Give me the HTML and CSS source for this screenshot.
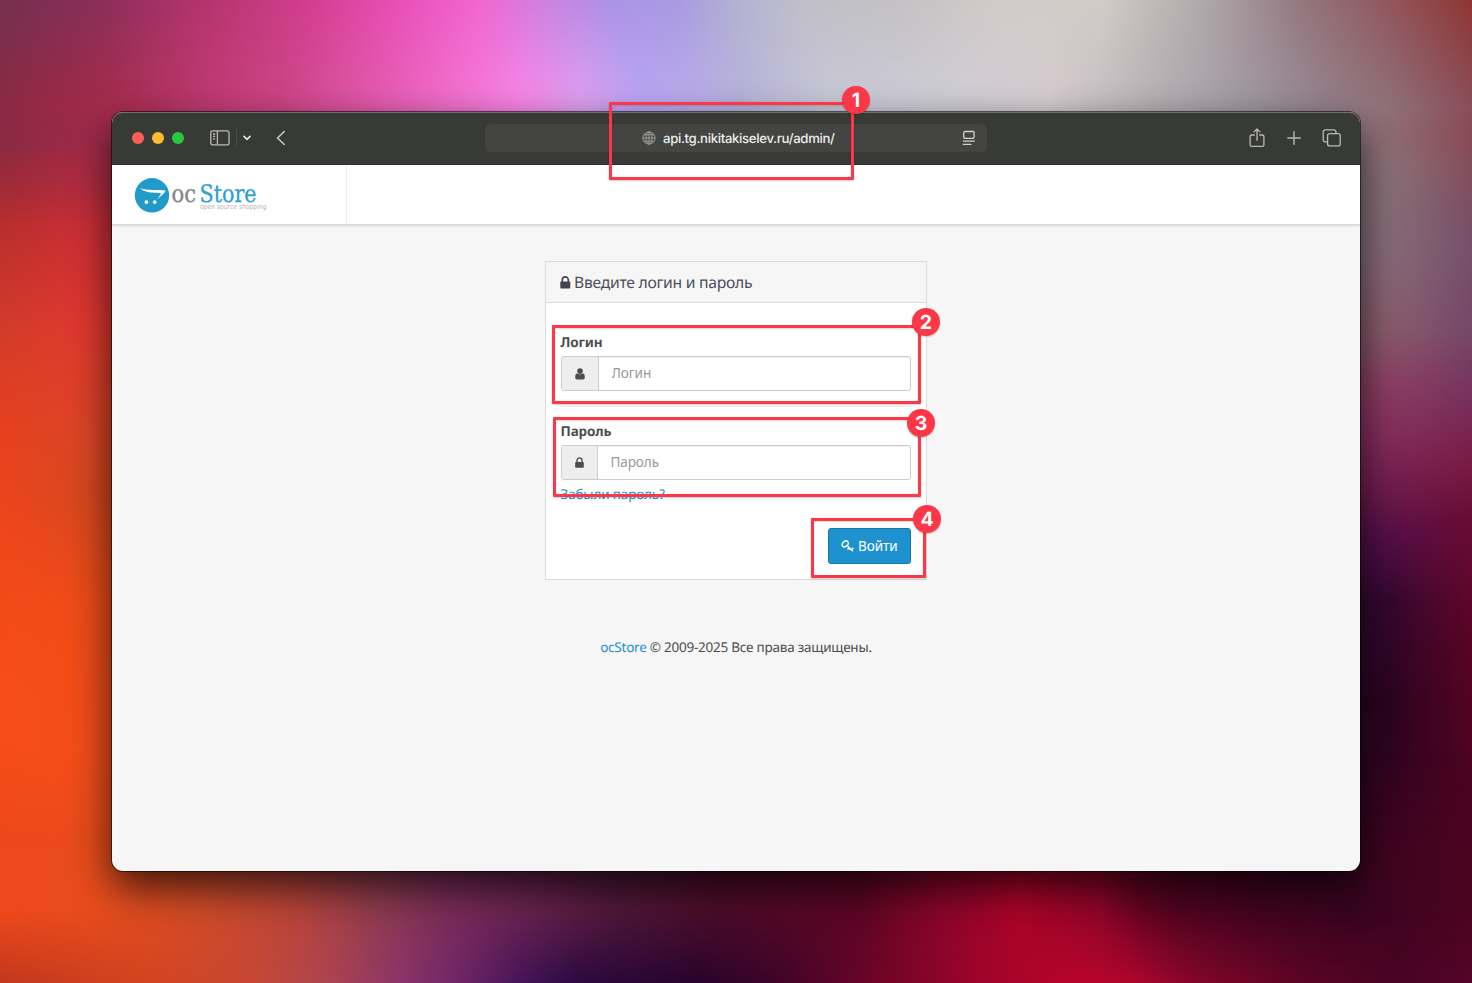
FILE: index.html
```html
<!DOCTYPE html>
<html lang="ru">
<head>
<meta charset="utf-8">
<title>ocStore</title>
<link rel="stylesheet" href="styles.css">
</head>
<body>
<div class="wallpaper">
  <div class="band band-left"></div><div class="band band-left-in"></div>
  <div class="band band-right"></div><div class="band band-right-in"></div>
  <div class="band band-top"></div><div class="band band-top-in"></div>
  <div class="band band-bottom"></div><div class="band band-bottom-in"></div>
</div>
<main class="window">
  <div class="toolbar">
    <div class="tools-left">
      <div class="lights"><i class="light red"></i><i class="light yellow"></i><i class="light green"></i></div>
      <svg class="ic-sidebar" width="20" height="16" viewBox="0 0 20 16" fill="none" stroke="#b9bab6" stroke-width="1.3"><rect x=".8" y=".8" width="18.2" height="14" rx="1.6"/><path d="M7.4 1v13.6M3 4h2.2M3 6.4h2.2M3 8.800h2.200"/></svg>
      <span class="sep"></span>
      <svg class="ic-down" width="10" height="8" viewBox="0 0 10 8" fill="none" stroke="#e2e2df" stroke-width="1.7" stroke-linecap="round" stroke-linejoin="round"><path d="M2 2.300l3 3 3-3"/></svg>
      <svg class="ic-back" width="10" height="16" viewBox="0 0 10 16" fill="none" stroke="#c9cac6" stroke-width="1.5" stroke-linecap="round" stroke-linejoin="round"><path d="M8.300 1.500L1.500 8l6.800 6.500"/></svg>
    </div>
    <div class="address">
      <svg class="ic-globe" width="14" height="14" viewBox="0 0 14 14" fill="none" stroke="#a4a4a2" stroke-width=".9"><circle cx="7" cy="7" r="6.100"/><ellipse cx="7" cy="7" rx="3" ry="6.100"/><path d="M7 .9v12.200M.9 7h12.200M1.900 3.800h10.200M1.900 10.200h10.200"/></svg>
      <span class="url">api.tg.nikitakiselev.ru/admin/</span>
      <svg class="ic-reader" width="14" height="16" viewBox="0 0 14 16" fill="none" stroke="#d0d0ce" stroke-width="1.300" stroke-linecap="round"><rect x="1.700" y="1.500" width="10.400" height="6.800" rx="1.300"/><path d="M1.400 11.200h11M1.400 14.400h7.600"/></svg>
    </div>
    <div class="tools-right">
      <svg width="16" height="20" viewBox="0 0 16 20" fill="none" stroke="#b9bab6" stroke-width="1.300" stroke-linecap="round" stroke-linejoin="round"><path d="M5.300 7H2.600A1.500 1.500 0 0 0 1.100 8.500v8.400a1.500 1.500 0 0 0 1.500 1.500h10.800a1.500 1.500 0 0 0 1.500-1.500V8.500A1.500 1.500 0 0 0 13.400 7h-2.700M8 12.300V1.200M5 3.900l3-2.900 3 2.900"/></svg>
      <svg width="14" height="14" viewBox="0 0 14 14" fill="none" stroke="#b9bab6" stroke-width="1.400" stroke-linecap="round"><path d="M7 .8v12.400M.8 7h12.400"/></svg>
      <svg width="20" height="18" viewBox="0 0 20 18" fill="none" stroke="#b9bab6" stroke-width="1.300"><path d="M5.300 12.800H3.200a2 2 0 0 1-2-2V2.800a2 2 0 0 1 2-2h8.700a2 2 0 0 1 2 2v1.700"/><rect x="5.600" y="4.600" width="12.600" height="12.300" rx="2"/></svg>
    </div>
  </div>
  <header class="header">
    <div class="brand">
      <svg class="logo" width="140" height="40" viewBox="0 0 140 40">
        <circle cx="20" cy="20.300" r="17.200" fill="#229ac8"/>
        <path d="M8 12.500C11 15 15 14.700 32.500 15.300C35 15.700 32 18.500 25.300 24.200C27 21.500 29.800 18.700 28.800 18.300C26 17.500 12 19 8 12.500Z" fill="#fff"/>
        <circle cx="14.400" cy="27.100" r="1.900" fill="#fff"/><circle cx="22.700" cy="27.100" r="1.900" fill="#fff"/>
        <text class="logo-text logo-oc" x="39.500" y="26.500" textLength="24.500" lengthAdjust="spacingAndGlyphs">oc</text>
        <text class="logo-text logo-store" x="67.500" y="26.500" textLength="57" lengthAdjust="spacingAndGlyphs">Store</text>
        <text class="logo-tag" x="68" y="34.300" textLength="66.500" lengthAdjust="spacingAndGlyphs">open source shopping</text>
      </svg>
    </div>
  </header>
  <section class="content">
    <form class="panel">
      <h1 class="panel-title">
        <svg width="11" height="13" viewBox="0 0 11 13"><rect x=".3" y="5.600" width="10" height="6.900" rx=".9" fill="#43434f"/><path d="M2.300 6V3.900a3 3 0 0 1 6 0V6" fill="none" stroke="#43434f" stroke-width="1.600"/></svg>
        <span>Введите логин и пароль</span>
      </h1>
      <div class="panel-body">
        <div class="group">
          <label class="label" for="login">Логин</label>
          <div class="field">
            <span class="addon"><svg width="10" height="12" viewBox="0 0 10 12" fill="#4d4d4d"><circle cx="5" cy="3.100" r="2.800"/><path d="M2.300 5.300c-1.600.1-2.100 2-2.100 4 0 1.400.7 2.200 1.800 2.200h6c1.100 0 1.800-.8 1.800-2.200 0-2-.5-3.900-2.100-4C6.500 6.800 3.500 6.800 2.300 5.300z"/></svg></span>
            <input class="input" id="login" type="text" placeholder="Логин">
          </div>
        </div>
        <div class="group group-next">
          <label class="label" for="password">Пароль</label>
          <div class="field">
            <span class="addon addon-lock"><svg width="9" height="11" viewBox="0 0 9 11"><rect x=".2" y="4.900" width="8.600" height="5.800" rx=".8" fill="#4d4d4d"/><path d="M2 5.300V3.400a2.500 2.500 0 0 1 5 0v1.900" fill="none" stroke="#4d4d4d" stroke-width="1.400"/></svg></span>
            <input class="input" id="password" type="password" placeholder="Пароль">
          </div>
          <a class="forgot">Забыли пароль?</a>
        </div>
        <div class="actions">
          <button class="submit" type="button">
            <svg width="13" height="12" viewBox="0 0 13 12" fill="none" stroke="#fff" stroke-width="1.400"><ellipse cx="4.200" cy="3.900" rx="3.400" ry="2.500" transform="rotate(-38 4.200 3.900)"/><path d="M5.800 5.300l6.200 5.900M8.200 7.600l-1.700 1.900M10.600 9.700l1.800-2M9.300 8.600l-1 1.200"/></svg>
            <span>Войти</span>
          </button>
        </div>
      </div>
    </form>
    <footer class="footer"><a class="link">ocStore</a> © 2009-2025 Все права защищены.</footer>
  </section>
</main>
<div class="mark mark-1"><b class="num">1</b></div>
<div class="mark mark-2"><b class="num">2</b></div>
<div class="mark mark-3"><b class="num">3</b></div>
<div class="mark mark-4"><b class="num">4</b></div>
</body>
</html>
```
FILE: styles.css
```css
* { box-sizing: border-box; }
body { margin: 0; width: 1472px; height: 983px; padding: 112px; overflow: hidden; position: relative; font-family: "Noto Sans", "Open Sans", sans-serif; font-size: 13.500px; letter-spacing: -.16px; text-rendering: geometricPrecision; color: #4d4d4d; background: #4a0420; }
svg { display: block; flex: none; }

/* Wallpaper: four edge bands, each fading from an outer to an inner gradient */
.wallpaper { position: absolute; inset: 0; overflow: hidden; }
.band { position: absolute; }
.band-left, .band-left-in { left: 0; top: 0; width: 240px; height: 983px; }
.band-left { background: linear-gradient(180deg, #74304f 0, #87293f 80px, #9a2a3a 150px, #bd302c 240px, #d23c2a 330px, #e5401f 420px, #f2481a 560px, #f84e1b 700px, #f44b19 820px, #e6451c 900px, #be351d 983px); }
.band-left-in { background: linear-gradient(180deg, #8d3060 0, #a22c4c 100px, #b02c40 160px, #d03034 250px, #e0392e 330px, #dc4526 430px, #d8481e 500px, #ee4c18 600px, #f44e1a 760px, #ee4c1c 870px, #dc4a22 950px, #d0431f 983px); mask-image: linear-gradient(90deg, transparent 0, #000 80px); }
.band-right, .band-right-in { right: 0; top: 0; width: 240px; height: 983px; }
.band-right { background: linear-gradient(180deg, #903634 0, #964450 60px, #824e60 150px, #77506a 250px, #754868 330px, #76305c 400px, #7a1c44 460px, #690c34 520px, #580422 650px, #4a0420 800px, #580628 983px); }
.band-right-in { background: linear-gradient(180deg, #986068 0, #8f7078 100px, #857078 200px, #886a78 260px, #8a5c6c 330px, #8c4264 380px, #842c5c 440px, #6a1a4a 500px, #58104a 530px, #340830 600px, #2a0420 700px, #360420 850px, #440426 983px); mask-image: linear-gradient(270deg, transparent 0, #000 84px); }
.band-top, .band-top-in { left: 0; top: 0; width: 1472px; height: 240px; }
.band-top { background: linear-gradient(90deg, #74304f 0, #8a2f5a 100px, #b4346c 200px, #d03e8c 300px, #e950b8 400px, #f266d0 480px, #d080e0 540px, #ab93e8 610px, #a89be0 680px, #b4b2d2 740px, #c0bfc8 800px, #c4c2c4 900px, #d3cbca 1000px, #d2ccc8 1100px, #b0aaac 1200px, #947880 1300px, #925258 1400px, #903634 1472px); mask-image: linear-gradient(#000 112px, transparent 160px); }
.band-top-in { background: linear-gradient(90deg, #8a2a42 0, #992945 60px, #a62c4c 112px, #bd3a70 200px, #cd4585 280px, #e860b8 400px, #f985e6 520px, #dfa0f0 580px, #baa5f5 640px, #b8b2dc 740px, #c8c8d6 830px, #cfcdd6 950px, #d6ccd0 1050px, #b8b0b4 1150px, #a098a0 1250px, #94808a 1330px, #8f7078 1390px, #8a4d58 1472px); mask-image: linear-gradient(transparent 0, #000 105px, #000 112px, transparent 220px); }
.band-bottom, .band-bottom-in { left: 0; bottom: 0; width: 1472px; height: 240px; }
.band-bottom { background: linear-gradient(90deg, #c4381e 0, #d4441f 150px, #c84834 250px, #ac4450 330px, #8c3468 400px, #6e2668 460px, #461458 520px, #2c0a40 580px, #28042c 700px, #400428 780px, #700428 880px, #a0042a 980px, #b8042c 1070px, #b0062c 1130px, #80062a 1200px, #5c0424 1300px, #480424 1400px, #560428 1472px); mask-image: linear-gradient(transparent 80px, #000 140px); }
.band-bottom-in { background: linear-gradient(90deg, #ee491b 0, #e84d1c 100px, #d04c28 200px, #b8443c 300px, #8f3c50 380px, #7a2c58 450px, #6a2450 520px, #501838 620px, #4c0c28 720px, #5c0624 860px, #88062a 940px, #ac0428 1020px, #8e0628 1100px, #640422 1140px, #500420 1180px, #40041f 1260px, #380420 1350px, #4a0420 1472px); mask-image: linear-gradient(transparent 10px, #000 110px, #000 165px, transparent 240px); }
.wallpaper::after { content: ""; position: absolute; left: 112px; top: 112px; width: 1248px; height: 759px; border-radius: 11px; box-shadow: 0 16px 40px rgba(0,0,0,.72); }

.window { position: relative; width: 1248px; height: 759px; border-radius: 11px; display: flex; flex-direction: column; background: #f6f6f6; overflow: clip; box-shadow: 0 0 0 1px rgba(0,0,0,.55); }
.toolbar { flex: none; height: 53px; background: #383a35; display: grid; grid-template-columns: 1fr 502px 1fr; align-items: center; box-shadow: inset 0 1px 0 #70716e; border-bottom: 1px solid #30312d; border-radius: 11px 11px 0 0; }
.tools-left { display: flex; align-items: center; padding-left: 20px; }
.lights { display: flex; gap: 8px; margin-right: 26px; }
.light { width: 12px; height: 12px; border-radius: 50%; }
.red { background: #ff5f57; }
.yellow { background: #febc2e; }
.green { background: #28c840; }
.sep { width: 1px; height: 18px; margin: 0 5px 0 6px; background: #4b4c48; }
.ic-back { margin-left: 24px; }
.address { height: 28px; border-radius: 6px; background: #444543; display: flex; align-items: center; padding: 0 11px 0 156.500px; }
.url { margin-left: 7.500px; font: 500 13.200px/28px Inter, sans-serif; color: #ededeb; letter-spacing: -.34px; white-space: nowrap; padding-top: 2px; }
.ic-reader { margin-left: auto; }
.tools-right { display: flex; align-items: center; justify-content: flex-end; gap: 21.500px; padding-right: 18px; }
.header { position: relative; flex: none; height: 60px; background: #fff; border-bottom: 1px solid #d9d9d9; box-shadow: 0 1px 2px rgba(0,0,0,.12); display: flex; }
.brand { width: 235px; border-right: 1px solid #eee; padding: 10px 0 0 20px; }
.logo { overflow: visible; letter-spacing: 0; }
.logo-text { font: 24px "DejaVu Serif", serif; stroke-width: .35px; }
.logo-oc { fill: #858585; stroke: #858585; }
.logo-store { fill: #2f9fd0; stroke: #2f9fd0; }
.logo-tag { font: 7px "DejaVu Sans", sans-serif; fill: #b4b4b4; }
.content { flex: 1; display: flex; flex-direction: column; align-items: center; padding-top: 36px; }
.panel { width: 382px; height: 319px; background: #fff; border: 1px solid #dcdcdc; }
.panel-title { margin: 0; height: 41px; padding: 0 14px; display: flex; align-items: center; gap: 3px; background: #f6f6f6; border-bottom: 1px solid #dcdcdc; font-size: 15.700px; letter-spacing: -.27px; font-weight: 400; color: #4c4d5a; white-space: nowrap; }
.panel-body { padding: 30px 15px 0 14.500px; }
.group { height: 74px; border-bottom: 1px solid #ededed; }
.group-next { padding-top: 15px; height: 101px; border: 0; }
.label { display: block; height: 23px; line-height: 18px; font-weight: 700; }
.field { display: flex; height: 35px; border: 1px solid #ccc; border-radius: 3px; background: #fff; overflow: hidden; box-shadow: inset 0 1px 1px rgba(0,0,0,.06); }
.addon { width: 37px; flex: none; background: #eee; border-right: 1px solid #ccc; display: flex; align-items: center; justify-content: center; }
.addon-lock { width: 36px; }
.input { flex: 1; min-width: 0; border: 0; background: none; padding: 0 13px 1px; font: inherit; letter-spacing: -.08px; color: #555; }
.input::placeholder { color: #999; opacity: 1; }
.forgot { display: block; margin-top: 5px; line-height: 18px; color: #1e91cf; }
.actions { display: flex; justify-content: flex-end; padding-top: 20px; }
.submit { width: 83.500px; height: 36px; padding: 0; border: 1px solid #1978ab; border-radius: 3px; background: #1e91cf; color: #fff; font: inherit; letter-spacing: -.1px; display: flex; align-items: center; justify-content: center; gap: 4px; }
.footer { margin-top: 57px; line-height: 20px; letter-spacing: -.24px; white-space: nowrap; }
.link { color: #1e91cf; }

/* Numbered callouts over the window */
.mark { position: absolute; border: 3px solid #fb3748; border-radius: 1px; box-shadow: 0 1px 2px rgba(0,0,0,.2), inset 0 1px 2px rgba(0,0,0,.15); }
.num { position: absolute; width: 28px; height: 28px; border-radius: 50%; background: #fb3748; color: #fff; font: 700 19.500px/28px Inter, sans-serif; letter-spacing: 0; text-align: center; box-shadow: 0 1px 2px rgba(0,0,0,.2); }
.mark-1 { left: 609px; top: 102px; width: 245px; height: 78px; }
.mark-1 .num { left: 230px; top: -19px; }
.mark-2 { left: 552px; top: 325px; width: 369px; height: 79px; }
.mark-2 .num { left: 357px; top: -20px; }
.mark-3 { left: 552.500px; top: 416.500px; width: 368.500px; height: 80px; }
.mark-3 .num { left: 351.500px; top: -10.500px; }
.mark-4 { left: 811px; top: 518px; width: 115px; height: 60px; }
.mark-4 .num { left: 99px; top: -16px; }
```
